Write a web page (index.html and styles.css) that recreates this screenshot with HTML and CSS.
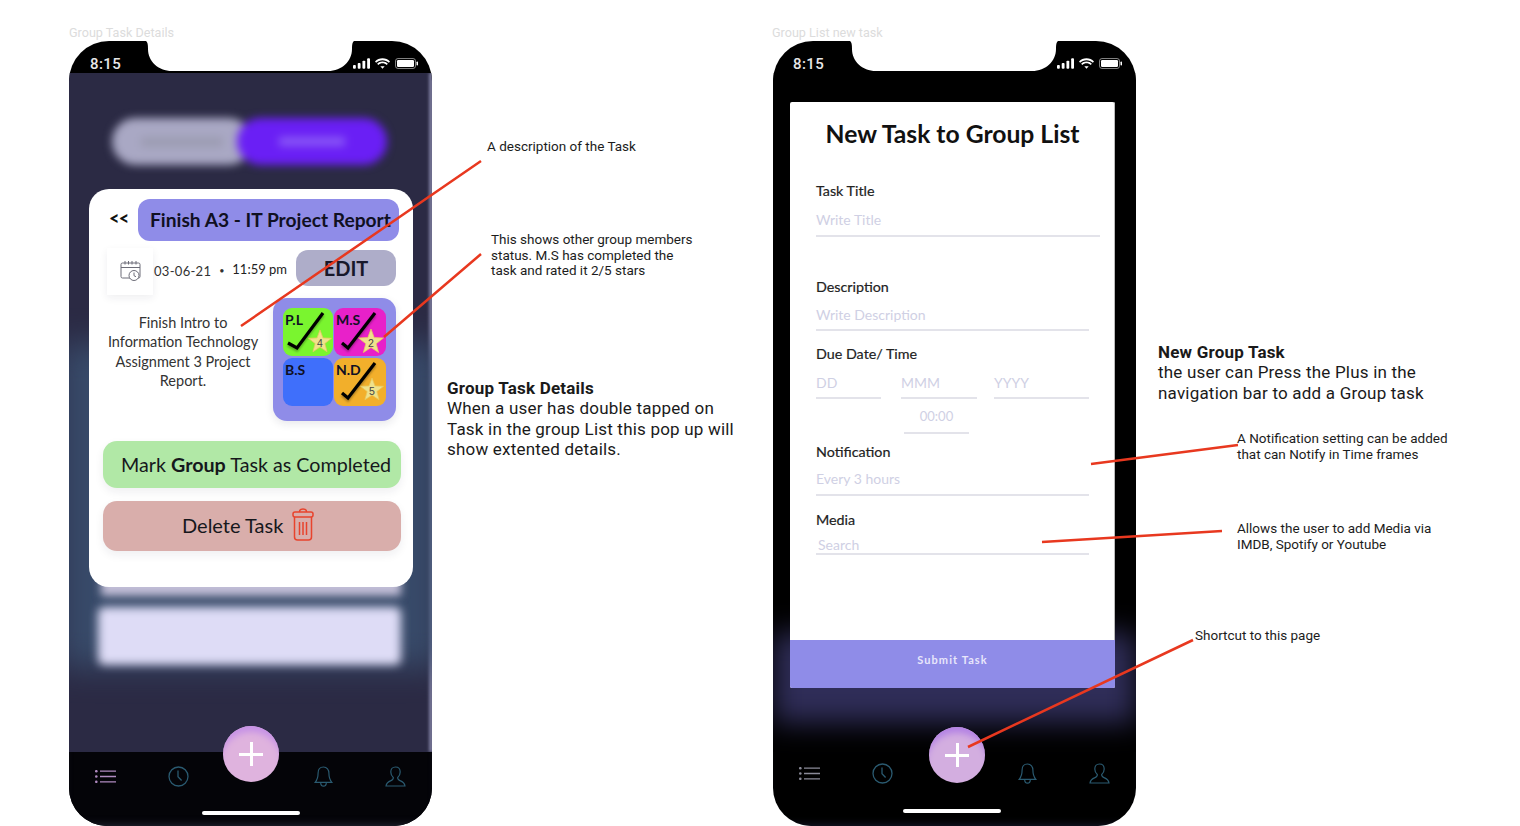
FILE: index.html

```html
<!DOCTYPE html>
<html lang="en">
<head>
    <meta charset="UTF-8">
    <meta name="viewport" content="width=device-width, initial-scale=1.0">
    <title>Group Task Screens</title>
    <link rel="stylesheet" href="styles.css">
</head>
<body>
    <svg class="defs" width="0" height="0">
        <defs>
            <symbol id="i-notch" viewBox="0 0 216 31"><path d="M0 0C5 0 6 2 6 9 6 21 16 31 30 31H186C200 31 210 21 210 9 210 2 211 0 216 0Z"/></symbol>
            <symbol id="i-signal" viewBox="0 0 18 11"><rect x="0" y="7" width="3" height="4" rx="1"/><rect x="5" y="5" width="3" height="6" rx="1"/><rect x="10" y="2.500" width="3" height="8.500" rx="1"/><rect x="15" y="0" width="3" height="11" rx="1"/></symbol>
            <symbol id="i-wifi" viewBox="0 0 16 11"><path d="M8 2C5.300 2 3 3 1.200 4.700L0 3.400C2.100 1.300 4.900 0 8 0s5.900 1.300 8 3.400l-1.200 1.300C13 3 10.700 2 8 2zM8 5.200c-1.700 0-3.300.7-4.500 1.800L2.300 5.700C3.800 4.200 5.800 3.300 8 3.300s4.200.9 5.700 2.400L12.500 7C11.300 5.900 9.700 5.200 8 5.200zM8 8.400l2.300-.1L8 11 5.700 8.300z"/></symbol>
            <symbol id="i-battery" viewBox="0 0 23 11"><rect x="0.500" y="0.500" width="20" height="10" rx="2.500" fill="none" stroke="currentColor" opacity=".5"/><rect x="2" y="2" width="17" height="7" rx="1.200"/><rect x="21.500" y="3.500" width="1.500" height="4" rx=".7"/></symbol>
            <symbol id="i-list" viewBox="0 0 21 13"><g stroke="currentColor" stroke-width="1.300" fill="none"><path d="M5 1.200h16M5 6.500h16M5 11.800h16"/></g><circle cx="1.300" cy="1.200" r="1.300"/><circle cx="1.300" cy="6.500" r="1.300"/><circle cx="1.300" cy="11.800" r="1.300"/></symbol>
            <symbol id="i-clock" viewBox="0 0 21 21"><g fill="none" stroke="currentColor" stroke-width="1.300"><circle cx="10.500" cy="10.500" r="9.500"/><path d="M10 4.500v6.300l3.600 3.700"/></g></symbol>
            <symbol id="i-bell" viewBox="0 0 18 21"><g fill="none" stroke="currentColor" stroke-width="1.200"><path d="M9 1c-3.500 0-5.400 2.700-5.400 6 0 4.500-.6 6.500-2.900 9.300h16.600c-2.300-2.800-2.900-4.800-2.900-9.300 0-3.300-1.900-6-5.400-6z"/><path d="M6.200 16.800c0 2.200 1.300 3.400 2.800 3.400s2.800-1.200 2.800-3.400"/></g></symbol>
            <symbol id="i-user" viewBox="0 0 21 21"><path fill="none" stroke="currentColor" stroke-width="1.200" d="M10.500 1c-3 0-4.700 2.300-4.700 5 0 2.300 1 4.300 2.500 5.400.2 1.600-.6 2.500-2.300 3.200-2.500 1-4.600 1.900-5 5.400h19c-.4-3.500-2.500-4.400-5-5.400-1.700-.7-2.500-1.600-2.300-3.200 1.500-1.100 2.500-3.100 2.500-5.400 0-2.700-1.700-5-4.700-5z"/></symbol>
            <symbol id="i-star" viewBox="-14 -14 28 28"><polygon points="0,-13 3.200,-4.400 12.400,-4 5.200,1.700 7.600,10.500 0,5.500 -7.600,10.500 -5.200,1.700 -12.400,-4 -3.200,-4.400" fill="#efe28c" stroke="#e8c95f" stroke-width=".8"/></symbol>
        </defs>
    </svg>

    <div class="canvas">
        <p class="caption caption-left">Group Task Details</p>
        <p class="caption caption-right">Group List new task</p>

        <!-- Group task details phone -->
        <section class="phone phone-left">
            <div class="status">
                <span class="time">8:15</span>
                <svg class="notch"><use href="#i-notch"/></svg>
                <div class="status-icons">
                    <svg class="ic-signal"><use href="#i-signal"/></svg>
                    <svg class="ic-wifi"><use href="#i-wifi"/></svg>
                    <svg class="ic-battery"><use href="#i-battery"/></svg>
                </div>
            </div>
            <div class="screen screen-dark">
                <div class="edge-glow"></div>
                <div class="back-glow"></div>
                <div class="ghost-strip"></div>
                <div class="ghost-bar"></div>
                <div class="ghost-toggle">
                    <div class="ghost-off"><span></span></div>
                    <div class="ghost-on"><span></span></div>
                </div>
                <div class="card">
                    <div class="card-head">
                        <span class="back">&lt;&lt;</span>
                        <h2 class="task-name">Finish A3 - IT Project Report</h2>
                    </div>
                    <div class="card-meta">
                        <div class="cal-box">
                            <svg width="22" height="22" viewBox="0 0 22 22" fill="none" stroke="#6d6d78" stroke-width="1">
                                <rect x="1" y="3" width="19" height="15" rx="1.500"/>
                                <path d="M1 7.500h19M5 1v3.500M8.500 1v3.500M12 1v3.500M16 1v3.500"/>
                                <circle cx="14" cy="15.500" r="5" fill="#fff"/>
                                <path d="M14 12.500v3.200l2 1"/>
                            </svg>
                        </div>
                        <span class="date">03-06-21</span>
                        <span class="dot">•</span>
                        <span class="date date-time">11:59 pm</span>
                        <button class="edit">EDIT</button>
                    </div>
                    <div class="card-body">
                        <p class="desc">Finish Intro to Information Technology Assignment 3 Project Report.</p>
                        <div class="members">
                            <div class="member green">
                                <b>P.L</b>
                                <svg class="tick" viewBox="0 0 52 48"><polyline points="5,35 14,40 40,5"/><use href="#i-star" x="24" y="21" width="26" height="26"/><text x="37" y="38.500">4</text></svg>
                            </div>
                            <div class="member pink">
                                <b>M.S</b>
                                <svg class="tick" viewBox="0 0 52 48"><polyline points="8,35 14,40 41,5"/><use href="#i-star" x="23" y="20" width="28" height="28"/><text x="37" y="38.500">2</text></svg>
                            </div>
                            <div class="member blue"><b>B.S</b></div>
                            <div class="member orange">
                                <b>N.D</b>
                                <svg class="tick" viewBox="0 0 52 48"><polyline points="8,35 14,40 41,5"/><use href="#i-star" x="25" y="19" width="26" height="26"/><text x="38" y="36.500">5</text></svg>
                            </div>
                        </div>
                    </div>
                    <button class="btn-green">Mark <b>Group</b> Task as Completed</button>
                    <button class="btn-red">
                        Delete Task
                        <svg class="trash" width="22" height="33" viewBox="0 0 22 33" fill="none" stroke="#e8432d" stroke-width="1.500">
                            <path d="M7.500 4c0-4 7-4 7 0"/>
                            <rect x="1" y="4" width="20" height="5" rx="2"/>
                            <path d="M2.500 9v20c0 2 1 3 3 3h11c2 0 3-1 3-3V9"/>
                            <path d="M7.500 14v13M11 14v13M14.500 14v13"/>
                        </svg>
                    </button>
                </div>
            </div>
            <nav class="tabs tabs-left">
                <svg class="ic-list"><use href="#i-list"/></svg>
                <svg class="ic-tab"><use href="#i-clock"/></svg>
                <span></span>
                <svg class="ic-tab"><use href="#i-bell"/></svg>
                <svg class="ic-tab"><use href="#i-user"/></svg>
                <div class="fab fab-left"><span class="plus"></span></div>
                <div class="home-bar"></div>
            </nav>
        </section>

        <!-- New group task phone -->
        <section class="phone phone-right">
            <div class="status">
                <span class="time">8:15</span>
                <svg class="notch"><use href="#i-notch"/></svg>
                <div class="status-icons">
                    <svg class="ic-signal"><use href="#i-signal"/></svg>
                    <svg class="ic-wifi"><use href="#i-wifi"/></svg>
                    <svg class="ic-battery"><use href="#i-battery"/></svg>
                </div>
            </div>
            <div class="screen screen-black">
                <div class="panel-glow"></div>
                <form class="panel">
                    <div class="panel-body">
                        <h1 class="panel-title">New Task to Group List</h1>
                        <label class="label mt-title">Task Title</label>
                        <div class="input input-wide mt-13">Write Title</div>
                        <label class="label mt-desc">Description</label>
                        <div class="input mt-12">Write Description</div>
                        <label class="label mt-due">Due Date/ Time</label>
                        <div class="date-row">
                            <div class="input date-dd">DD</div>
                            <div class="input date-mm">MMM</div>
                            <div class="input date-yy">YYYY</div>
                        </div>
                        <div class="input input-time">00:00</div>
                        <label class="label mt-notify">Notification</label>
                        <div class="input mt-11">Every 3 hours</div>
                        <label class="label mt-media">Media</label>
                        <div class="input input-search">Search</div>
                    </div>
                    <div class="submit">Submit Task</div>
                </form>
            </div>
            <nav class="tabs tabs-right">
                <svg class="ic-list"><use href="#i-list"/></svg>
                <svg class="ic-tab"><use href="#i-clock"/></svg>
                <span></span>
                <svg class="ic-tab"><use href="#i-bell"/></svg>
                <svg class="ic-tab"><use href="#i-user"/></svg>
                <div class="fab fab-right"><span class="plus"></span></div>
                <div class="home-bar"></div>
            </nav>
        </section>

        <!-- Annotations -->
        <p class="note note-1">A description of the Task</p>
        <p class="note note-2">This shows other group members<br>status. M.S has completed the<br>task and rated it 2/5 stars</p>
        <div class="big-note big-note-1">
            <b>Group Task Details</b><br>
            When a user has double tapped on<br>Task in the group List this pop up will<br>show extented details.
        </div>
        <div class="big-note big-note-2">
            <b>New Group Task</b><br>
            the user can Press the Plus in the<br>navigation bar to add a Group task
        </div>
        <p class="note note-3">A Notification setting can be added<br>that can Notify in Time frames</p>
        <p class="note note-4">Allows the user to add Media via<br>IMDB, Spotify or Youtube</p>
        <p class="note note-5">Shortcut to this page</p>

        <svg class="arrows" width="1520" height="826" viewBox="0 0 1520 826">
            <path d="M241 326 481 161M384 337 481 254M1091 464 1238 445M1042 542 1222 531M968 747 1193 640"/>
        </svg>
    </div>
</body>
</html>
```

FILE: styles.css

```css
/* General styles */
* {
    box-sizing: border-box;
}

body {
    margin: 0;
    background: #fff;
    font-family: "Lato", "Liberation Sans", sans-serif;
    overflow: hidden;
}

p, h1, h2 {
    margin: 0;
}

button {
    font-family: inherit;
    border: none;
    padding: 0;
}

.defs {
    position: absolute;
}

/* Free canvas: artboards and annotations sit at their own places */
.canvas {
    position: relative;
    width: 1520px;
    height: 826px;
    overflow: hidden;
}

.caption {
    position: absolute;
    top: 26px;
    font: 12.600px/14px "Roboto", sans-serif;
    color: #dcdcdc;
}

.caption-left { left: 69px; }
.caption-right { left: 772px; }

.phone {
    position: absolute;
    top: 41px;
    width: 363px;
    height: 785px;
    border-radius: 40px 40px 38px 38px;
    background: #000;
    overflow: hidden;
    display: flex;
    flex-direction: column;
}

.phone-left { left: 69px; }
.phone-right { left: 773px; }

/* Status bar */
.status {
    position: relative;
    height: 32px;
    flex: none;
    display: flex;
    justify-content: space-between;
    color: #fff;
}

.time {
    margin: 15px 0 0 21px;
    font: 500 15px/16px "Roboto", sans-serif;
    letter-spacing: .4px;
    color: #e8e8e8;
}

.phone-right .time {
    margin-left: 20px;
}

.notch {
    position: absolute;
    left: 73px;
    top: -1px;
    width: 216px;
    height: 31px;
    fill: #fff;
}

.status-icons {
    display: flex;
    align-items: center;
    gap: 5px;
    margin: 17px 14px 0 0;
    height: 11px;
    fill: #fff;
    color: #fff;
}

.ic-signal { width: 17px; height: 11px; }
.ic-wifi { width: 15px; height: 11px; }
.ic-battery { width: 23px; height: 11px; }

/* Screens */
.screen {
    position: relative;
    flex: 1;
}

.screen-dark {
    background: #2b2a44;
    overflow: hidden;
}

.edge-glow {
    position: absolute;
    right: -1px;
    top: 0;
    bottom: 0;
    width: 4px;
    background: #7d7d9e;
    filter: blur(1.500px);
}

.back-glow {
    position: absolute;
    left: -10px;
    right: -10px;
    top: 270px;
    height: 325px;
    background: #3a5070;
    filter: blur(16px);
    opacity: .85;
}

.ghost-strip {
    position: absolute;
    left: 32px;
    width: 300px;
    top: 505px;
    height: 18px;
    background: #c3bfd8;
    filter: blur(4px);
}

.ghost-bar {
    position: absolute;
    left: 29px;
    width: 303px;
    top: 534px;
    height: 58px;
    background: #dedcf6;
    border-radius: 6px;
    filter: blur(5px);
}

.ghost-toggle {
    position: absolute;
    left: 43px;
    top: 45px;
    width: 275px;
    height: 47px;
    filter: blur(4px);
}

.ghost-off, .ghost-on {
    position: absolute;
    top: 0;
    height: 47px;
    border-radius: 24px;
    display: flex;
    align-items: center;
    justify-content: center;
}

.ghost-off {
    left: 0;
    width: 140px;
    background: #a9a8c4;
}

.ghost-off span {
    width: 82px;
    height: 10px;
    background: #9c9cb2;
}

.ghost-on {
    left: 125px;
    width: 150px;
    background: #6a1ff5;
}

.ghost-on span {
    width: 66px;
    height: 9px;
    background: #8a58f6;
}

/* Detail card */
.card {
    position: absolute;
    left: 20px;
    top: 116px;
    width: 324px;
    height: 398px;
    padding-top: 10px;
    background: #fff;
    border-radius: 20px;
    color: #111;
}

.card-head {
    display: flex;
    align-items: center;
    padding-left: 20px;
}

.back {
    width: 29px;
    margin-top: -4px;
    font: 900 18px/20px "Lato", sans-serif;
    letter-spacing: -.8px;
}

.task-name {
    width: 261px;
    height: 42px;
    padding-left: 12px;
    background: #8f8ce8;
    border-radius: 12px;
    font: 700 19.200px/42px "Lato", sans-serif;
    white-space: nowrap;
    color: #101022;
}

.card-meta {
    display: flex;
    align-items: flex-start;
    margin-top: 7px;
    padding-left: 18px;
}

.cal-box {
    width: 46px;
    height: 47px;
    padding: 12px 0 0 13px;
    background: #fff;
    box-shadow: 0 3px 8px rgba(30, 30, 60, .07);
}

.date {
    margin: 15px 0 0 1px;
    font-size: 13px;
    line-height: 16px;
    letter-spacing: .3px;
    color: #333;
}

.date-time {
    margin: 13px 0 0;
    letter-spacing: 0;
    color: #222;
}

.dot {
    width: 21px;
    margin-top: 15px;
    text-align: center;
    font-size: 9px;
    line-height: 16px;
    color: #333;
}

.edit {
    width: 100px;
    height: 36px;
    margin: 2px 0 0 9px;
    border-radius: 12px;
    background: #aeadc9;
    font: 700 20px/36px "Lato", sans-serif;
    color: #18182a;
}

.card-body {
    display: flex;
    margin: 3px 0 0 14px;
}

.desc {
    width: 160px;
    padding-top: 15px;
    text-align: center;
    font-size: 14.500px;
    line-height: 19.400px;
    color: #333;
}

.members {
    display: grid;
    grid-template-columns: 50px 52px;
    grid-template-rows: 48px 48px;
    gap: 2px 1px;
    width: 123px;
    height: 123px;
    margin-left: 10px;
    padding: 10px;
    background: #8f8ce8;
    border-radius: 14px;
    box-shadow: 0 3px 8px rgba(30, 30, 60, .1);
}

.member {
    position: relative;
    padding: 4px 0 0 2px;
    border-radius: 9px;
    font-size: 14px;
    line-height: 16px;
    color: #101024;
}

.green { background: #7af52f; }
.pink { background: #e821c9; }
.blue { background: #3f6ffb; }
.orange { background: #f2af2b; }

/* Check mark and star lie over the cell */
.tick {
    position: absolute;
    left: 0;
    top: 0;
    width: 52px;
    height: 48px;
    overflow: visible;
}

.tick polyline {
    fill: none;
    stroke: #000;
    stroke-width: 3.200;
    filter: drop-shadow(0 2px 1px rgba(0, 0, 0, .3));
}

.tick text {
    font: 10.500px "Liberation Sans", sans-serif;
    text-anchor: middle;
    fill: #444;
}

.btn-green, .btn-red {
    display: flex;
    align-items: center;
    width: 298px;
    margin-left: 14px;
    border-radius: 14px;
    color: #16181c;
    box-shadow: 0 4px 10px rgba(30, 30, 60, .07);
}

.btn-green {
    height: 47px;
    margin-top: 20px;
    padding: 0 0 0 18px;
    background: #b1e8a6;
    font-size: 19.700px;
    white-space: pre;
}

.btn-red {
    height: 50px;
    margin-top: 13px;
    padding: 0 0 2px 79px;
    gap: 9px;
    background: #d9aeab;
    font-size: 20px;
}

.trash {
    margin-top: -2px;
}

/* Tab bar */
.tabs {
    position: relative;
    flex: none;
    display: grid;
    grid-template-columns: repeat(5, 1fr);
    justify-items: center;
    align-items: start;
    padding-left: 1px;
    color: #2a5a70;
    fill: #b08ac0;
}

.tabs-left {
    height: 74px;
    padding-top: 14px;
    background: #040408;
    box-shadow: inset 0 -6px 10px -6px #2c3040;
}

.tabs-right {
    height: 74px;
    padding-top: 11px;
    box-shadow: inset 0 -6px 10px -6px #1c2038;
}

.ic-tab {
    width: 21px;
    height: 21px;
}

.ic-list {
    width: 21px;
    height: 13px;
    margin: 4px 2px 0 0;
    color: #b08ac0;
}

.tabs-right .ic-list {
    color: #8a8a98;
    fill: #8a8a98;
}

.fab {
    position: absolute;
    width: 56px;
    height: 56px;
    border-radius: 50%;
    display: flex;
    align-items: center;
    justify-content: center;
}

.fab-left {
    left: 154px;
    top: -26px;
    background: #dfb3de;
    box-shadow: inset 0 9px 6px -3px #c692e6;
}

.fab-right {
    left: 156px;
    top: -25px;
    background: #d3aee0;
    box-shadow: inset 0 9px 6px -3px #b483e4;
}

.plus {
    position: relative;
    width: 24px;
    height: 3px;
    background: #fff;
}

.plus::after {
    content: "";
    position: absolute;
    left: 10.500px;
    top: -10.500px;
    width: 3px;
    height: 24px;
    background: #fff;
}

.home-bar {
    position: absolute;
    left: 133px;
    top: 59px;
    width: 98px;
    height: 4px;
    border-radius: 2px;
    background: #fff;
}

.tabs-right .home-bar {
    left: 130px;
    top: 57px;
}

/* New task form */
.screen-black {
    background: #000;
}

.panel-glow {
    position: absolute;
    left: 0;
    right: 0;
    top: 560px;
    height: 90px;
    background: #2f2d58;
    filter: blur(14px);
}

.panel {
    position: relative;
    display: flex;
    flex-direction: column;
    width: 325px;
    height: 586px;
    margin: 29px 0 0 17px;
    background: #fff;
    border-radius: 2px;
    box-shadow: inset -1px 0 #bbb;
}

.panel-body {
    flex: 1;
    padding: 17px 0 0 26px;
}

.panel-title {
    margin-left: -26px;
    width: 325px;
    text-align: center;
    font: 700 24.700px/30px "Lato", sans-serif;
    color: #111;
}

.label {
    display: block;
    font-size: 14.300px;
    line-height: 16px;
    color: #222;
    -webkit-text-stroke: .2px #222;
}

.input {
    width: 273px;
    padding-bottom: 6px;
    font-size: 14px;
    line-height: 16px;
    color: #cfd0e4;
    border-bottom: 2px solid #e3e3ea;
}

.input-wide {
    width: 284px;
    padding-bottom: 7px;
}

.mt-title { margin-top: 34px; }
.mt-desc { margin-top: 42px; }
.mt-due { margin-top: 15px; }
.mt-notify { margin-top: 10px; }
.mt-media { margin-top: 16px; }
.mt-11 { margin-top: 11px; padding-bottom: 7px; }
.mt-12 { margin-top: 12px; }
.mt-13 { margin-top: 13px; }

.date-row {
    display: flex;
    margin-top: 13px;
}

.date-dd { width: 65px; }
.date-mm { width: 76px; margin-left: 20px; }
.date-yy { width: 95px; margin-left: 17px; }

.input-time {
    width: 65px;
    margin: 9px 0 0 88px;
    padding-bottom: 8px;
    text-align: center;
    font-size: 13px;
}

.input-search {
    margin-top: 9px;
    padding: 0 0 0 2px;
}

.submit {
    height: 48px;
    background: #8f8ce8;
    border-radius: 0 0 2px 2px;
    text-align: center;
    font: 700 11px/40px "Lato", sans-serif;
    letter-spacing: 1.100px;
    color: #e8e6fb;
}

/* Annotations */
.note {
    position: absolute;
    font: 13.500px/15.500px "Roboto", sans-serif;
    color: #1c1c1c;
}

.note-1 { left: 487px; top: 139px; }
.note-2 { left: 491px; top: 232px; }
.note-3 { left: 1237px; top: 431px; }
.note-4 { left: 1237px; top: 521px; }
.note-5 { left: 1195px; top: 628px; }

.big-note {
    position: absolute;
    font: 17px/20.300px "Roboto", sans-serif;
    letter-spacing: .2px;
    color: #1a1a1a;
}

.big-note-1 { left: 447px; top: 378px; }
.big-note-2 { left: 1158px; top: 342px; }

.arrows {
    position: absolute;
    left: 0;
    top: 0;
    pointer-events: none;
}

.arrows path {
    fill: none;
    stroke: #e8381f;
    stroke-width: 2.500;
}
```
